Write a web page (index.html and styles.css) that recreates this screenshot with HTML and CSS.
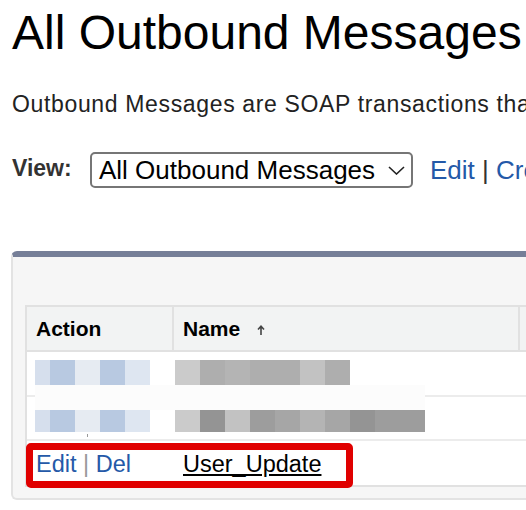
FILE: index.html
```html
<!DOCTYPE html>
<html lang="en">
<head>
    <meta charset="UTF-8">
    <meta name="viewport" content="width=device-width, initial-scale=1.0">
    <title>All Outbound Messages</title>
    <link rel="stylesheet" href="styles.css">
</head>
<body>
    <h1 class="page-title">All Outbound Messages</h1>
    <p class="intro">Outbound Messages are SOAP transactions that deliver field changes to an external endpoint.</p>

    <div class="view-bar">
        <span class="view-label">View:</span>
        <div class="view-select">
            <span>All Outbound Messages</span>
            <svg class="chevron" width="17" height="9" viewBox="0 0 17 9">
                <polyline points="1,1 8.5,8 16,1" fill="none" stroke="#222" stroke-width="1.6"/>
            </svg>
        </div>
        <div class="view-links">
            <a href="#">Edit</a> <span class="sep">|</span> <a href="#">Create New View</a>
        </div>
    </div>

    <div class="list-panel">
        <div class="list-table">
            <div class="list-row list-head">
                <div class="cell">Action</div>
                <div class="cell">Name
                    <svg class="sort-arrow" width="8" height="10" viewBox="0 0 8 10">
                        <path d="M4 10V1.5M1 4.5L4 1.2L7 4.5" fill="none" stroke="#444" stroke-width="1.6"/>
                    </svg>
                </div>
                <div class="cell"></div>
            </div>

            <!-- redacted rows -->
            <div class="list-row blur-row row-one">
                <div class="cell">
                    <div class="pixels action-pixels">
                        <i class="px narrow b1"></i><i class="px b2"></i><i class="px b3"></i><i class="px b2"></i><i class="px b4"></i>
                    </div>
                </div>
                <div class="cell">
                    <div class="pixels name-pixels">
                        <i class="px g1"></i><i class="px g3"></i><i class="px g4"></i><i class="px g3"></i><i class="px g3"></i><i class="px g5"></i><i class="px g3"></i>
                    </div>
                </div>
                <div class="cell"></div>
            </div>
            <div class="list-row blur-row row-two">
                <div class="cell">
                    <div class="pixels action-pixels">
                        <i class="px narrow b1"></i><i class="px b2"></i><i class="px b3"></i><i class="px b2"></i><i class="px b4"></i>
                    </div>
                </div>
                <div class="cell">
                    <div class="pixels name-pixels">
                        <i class="px g1"></i><i class="px g6"></i><i class="px g5"></i><i class="px g7"></i><i class="px g8"></i><i class="px g4"></i><i class="px g8"></i><i class="px g6"></i><i class="px g7"></i><i class="px g7"></i>
                    </div>
                </div>
                <div class="cell"></div>
            </div>

            <div class="list-row data-row">
                <div class="cell">
                    <a href="#">Edit</a> <span class="sep light">|</span> <a href="#">Del</a>
                </div>
                <div class="cell"><a href="#" class="record-link">User_Update</a></div>
                <div class="cell"></div>
            </div>

            <div class="redact-strip"></div>
            <div class="redact-tick"></div>
            <div class="highlight"></div>
        </div>
    </div>
</body>
</html>
```

FILE: styles.css
```css
html {
    overflow: hidden;
}

body {
    margin: 0;
    padding: 5px 0 0 12px;
    font-family: "Liberation Sans", Arial, sans-serif;
    color: #000;
    background: #fff;
}

a {
    color: #2459a8;
    text-decoration: none;
}

.page-title {
    margin: 0;
    font-size: 48px;
    font-weight: normal;
    line-height: 56px;
    white-space: nowrap;
}

.intro {
    margin: 29px 0 0;
    font-size: 23px;
    letter-spacing: 0.65px;
    line-height: 28px;
    color: #222;
    white-space: nowrap;
}

.view-bar {
    display: flex;
    align-items: center;
    margin-top: 34px;
    height: 36px;
    white-space: nowrap;
}

.view-label {
    flex-shrink: 0;
    width: 78px;
    padding-bottom: 4px;
    font-size: 23px;
    font-weight: bold;
    line-height: 36px;
    color: #333;
}

.view-select {
    flex-shrink: 0;
    box-sizing: border-box;
    width: 323px;
    height: 36px;
    padding: 0 6px 0 7px;
    border: 2px solid #767676;
    border-radius: 5px;
    display: flex;
    align-items: center;
    justify-content: space-between;
    font-size: 26px;
    line-height: 32px;
}

.view-links {
    flex-shrink: 0;
    margin-left: 17px;
    font-size: 26px;
    line-height: 36px;
}

.sep {
    color: #333;
}

.sep.light {
    color: #999;
}

.list-panel {
    box-sizing: border-box;
    width: 620px;
    margin: 63px 0 0 -1px;
    padding: 48px 0 11px 12px;
    background: #f6f6f6;
    border-top: 6px solid #767f98;
    border-left: 2px solid #e3e3e3;
    border-bottom: 2px solid #e3e3e3;
    border-radius: 6px 0 0 6px;
}

.list-table {
    position: relative;
    background: #fff;
    border: 2px solid #e1e1e1;
}

.list-row {
    display: grid;
    grid-template-columns: 147px 346px 1fr;
}

.cell {
    box-sizing: border-box;
    padding: 0 9px;
    white-space: nowrap;
}

.list-head {
    background: #f2f3f3;
    border-bottom: 2px solid #e1e1e1;
}

.list-head .cell {
    display: flex;
    align-items: center;
    height: 43px;
    border-right: 2px solid #e1e1e1;
    font-size: 21px;
    font-weight: bold;
}

.list-head .cell:last-child {
    border-right: none;
}

.sort-arrow {
    margin: 3px 0 0 17px;
}

.blur-row {
    border-bottom: 2px solid #ececec;
}

.blur-row .cell {
    padding: 0;
}

.row-one {
    height: 45px;
    padding-top: 8px;
    box-sizing: border-box;
}

.row-two {
    height: 44px;
    padding-top: 11px;
    box-sizing: border-box;
}

.pixels {
    display: flex;
    height: 24px;
}

.row-one .pixels {
    height: 25px;
}

.action-pixels {
    margin-left: 8px;
}

.name-pixels {
    margin-left: 1px;
}

.px {
    width: 25px;
}

.px.narrow { width: 15px; }

.b1 { background: #d6dfed; }
.b2 { background: #b8c9e1; }
.b3 { background: #e6ebf2; }
.b4 { background: #dee6f1; }

.g1 { background: #cbcbcb; }
.g3 { background: #aeaeae; }
.g4 { background: #b4b4b4; }
.g5 { background: #c2c2c2; }
.g6 { background: #949494; }
.g7 { background: #9d9d9d; }
.g8 { background: #a6a6a6; }

.data-row .cell {
    height: 44px;
    padding-top: 2px;
    font-size: 23.5px;
    line-height: 42px;
}

.record-link {
    color: #000;
    text-decoration: underline;
}

.redact-strip {
    position: absolute;
    left: 8px;
    top: 78px;
    width: 390px;
    height: 25px;
    background: #fcfcfc;
}

.redact-tick {
    position: absolute;
    left: 60px;
    top: 127px;
    width: 1px;
    height: 3px;
    background: #999;
}

.highlight {
    position: absolute;
    left: -1px;
    top: 136px;
    box-sizing: border-box;
    width: 327px;
    height: 45px;
    border: 7px solid #e00000;
    border-radius: 5px;
}
```
